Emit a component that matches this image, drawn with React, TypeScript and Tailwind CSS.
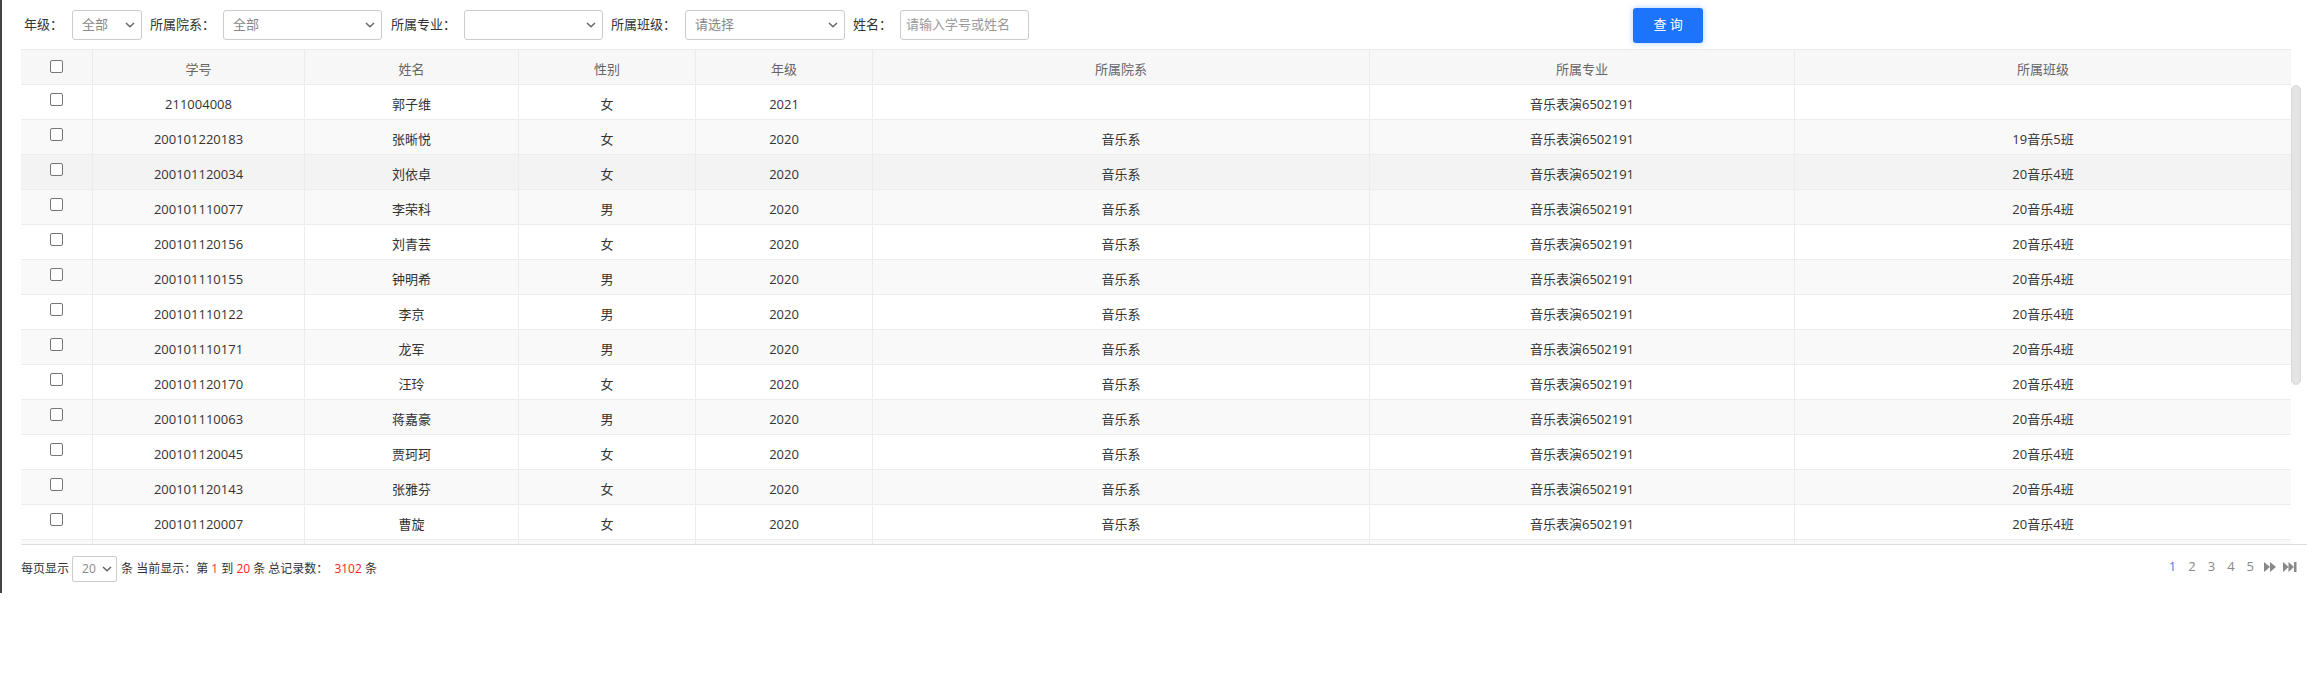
const rows: string[][] = [
  ["211004008", "郭子维", "女", "2021", "", "音乐表演6502191", ""],
  ["200101220183", "张晰悦", "女", "2020", "音乐系", "音乐表演6502191", "19音乐5班"],
  ["200101120034", "刘依卓", "女", "2020", "音乐系", "音乐表演6502191", "20音乐4班"],
  ["200101110077", "李荣科", "男", "2020", "音乐系", "音乐表演6502191", "20音乐4班"],
  ["200101120156", "刘青芸", "女", "2020", "音乐系", "音乐表演6502191", "20音乐4班"],
  ["200101110155", "钟明希", "男", "2020", "音乐系", "音乐表演6502191", "20音乐4班"],
  ["200101110122", "李京", "男", "2020", "音乐系", "音乐表演6502191", "20音乐4班"],
  ["200101110171", "龙军", "男", "2020", "音乐系", "音乐表演6502191", "20音乐4班"],
  ["200101120170", "汪玲", "女", "2020", "音乐系", "音乐表演6502191", "20音乐4班"],
  ["200101110063", "蒋嘉豪", "男", "2020", "音乐系", "音乐表演6502191", "20音乐4班"],
  ["200101120045", "贾珂珂", "女", "2020", "音乐系", "音乐表演6502191", "20音乐4班"],
  ["200101120143", "张雅芬", "女", "2020", "音乐系", "音乐表演6502191", "20音乐4班"],
  ["200101120007", "曹旋", "女", "2020", "音乐系", "音乐表演6502191", "20音乐4班"],
];

const headers = ["学号", "姓名", "性别", "年级", "所属院系", "所属专业", "所属班级"];

const cols = "grid grid-cols-[71px_212px_214px_177px_177px_497px_425px_497px]";

const Chevron = () => (
  <svg width="10" height="6" viewBox="0 0 10 6" className="shrink-0">
    <path d="M1 1l4 3.8L9 1" fill="none" stroke="#666" strokeWidth="1.5" />
  </svg>
);

const Select = ({ w, text }: { w: string; text: string }) => (
  <div className={`${w} h-[30px] flex items-center justify-between pl-[9px] pr-[6px] border border-[#ccc] rounded-[3px] bg-white text-[#888]`}>
    <span>{text}</span>
    <Chevron />
  </div>
);

const Box = () => (
  <input type="checkbox" className="appearance-none w-[13px] h-[13px] border border-[#767676] rounded-[2px] bg-white" />
);

const rowBg = (i: number) => (i === 2 ? "bg-[#f3f3f3]" : i % 2 === 1 ? "bg-[#f9f9f9]" : "bg-white");

export default function App() {
  return (
    <div className="w-[2307px] h-[678px] bg-white font-['Open_Sans','Noto_Sans_CJK_SC',sans-serif] text-[13px] text-[#333]">
      <div className="h-[593px] border-l-2 border-[#444] flex flex-col">
        {/* filters */}
        <div className="h-[49px] flex items-center pl-[22px] pt-[1px]">
          <span className="mr-[9px]">年级：</span>
          <Select w="w-[70px]" text="全部" />
          <span className="ml-2 mr-2">所属院系：</span>
          <Select w="w-[159px]" text="全部" />
          <span className="ml-[9px] mr-2">所属专业：</span>
          <Select w="w-[139px]" text="" />
          <span className="ml-2 mr-[9px]">所属班级：</span>
          <Select w="w-[160px]" text="请选择" />
          <span className="ml-2 mr-2">姓名：</span>
          <div className="w-[129px] h-[30px] flex items-center pl-[5px] border border-[#ccc] rounded-[3px] text-[#999]">
            请输入学号或姓名
          </div>
          <button className="ml-[604px] w-[70px] h-[35px] rounded-[3px] bg-[#1b74fb] text-white shadow-[0_0_6px_rgba(27,116,251,0.35)]">
            查 询
          </button>
        </div>

        {/* table */}
        <div className="pl-[19px]">
          <div className={`${cols} w-[2270px] h-[36px] bg-[#f7f7f7] border-y border-[#ebebeb] text-[#666]`}>
            <div className="flex items-center justify-center pb-[2px]">
              <Box />
            </div>
            {headers.map((h) => (
              <div key={h} className="flex items-center justify-center border-l border-[#ebebeb] pt-[5px]">
                {h}
              </div>
            ))}
          </div>
          <div className="flex h-[459px] overflow-hidden">
            <div className="w-[2270px] shrink-0">
              {rows.map((r, i) => (
                <div key={i} className={`${cols} h-[35px] border-b border-[#ececec] ${rowBg(i)}`}>
                  <div className="flex items-center justify-center pb-[5px]">
                    <Box />
                  </div>
                  {r.map((c, j) => (
                    <div key={j} className="flex items-center justify-center border-l border-[#ececec] pt-[5px]">
                      {c}
                    </div>
                  ))}
                </div>
              ))}
              {/* next row, scrolled out of view */}
              <div className={`${cols} h-[35px] bg-[#f9f9f9]`}>
                <div />
                {headers.map((h) => (
                  <div key={h} className="border-l border-[#ececec]" />
                ))}
              </div>
            </div>
            <div className="w-[16px] shrink-0">
              <div className="w-[10px] h-[300px] rounded-full bg-[#e4e4e4] border border-[#d9d9d9]" />
            </div>
          </div>
          <div className="h-px bg-[#dcdcdc]" />

          {/* pagination */}
          <div className="flex items-center justify-between pt-[11px] pr-[10px] text-[12px]">
            <div className="flex items-center">
              <span>每页显示</span>
              <div className="w-[45px] h-[26px] ml-[3px] mr-[4px] flex items-center justify-between pl-[9px] pr-[4px] border border-[#ccc] rounded-[2px] text-[#888]">
                <span>20</span>
                <Chevron />
              </div>
              <span>
                条 当前显示：第 <span className="text-[#ff3030]">1</span> 到 <span className="text-[#ff2020]">20</span> 条 总记录数：
                <span className="ml-[6px] text-[#ff2020]">3102</span> 条
              </span>
            </div>
            <div className="flex items-center gap-[12px] text-[13px] text-[#888] pb-[4px]">
              <span className="text-[#3b7cf7]">1</span>
              <span>2</span>
              <span>3</span>
              <span>4</span>
              <span>5</span>
              <svg width="12" height="10" viewBox="0 0 12 10" className="-ml-[2px]">
                <path d="M0 0L6 5L0 10Z M6 0L12 5L6 10Z" fill="#888" />
              </svg>
              <svg width="14" height="10" viewBox="0 0 14 10" className="-ml-[5px]">
                <path d="M0 0L5.5 5L0 10Z M5.5 0L11 5L5.5 10Z" fill="#888" />
                <rect x="11" y="0" width="2.5" height="10" fill="#888" />
              </svg>
            </div>
          </div>
        </div>
      </div>
    </div>
  );
}
